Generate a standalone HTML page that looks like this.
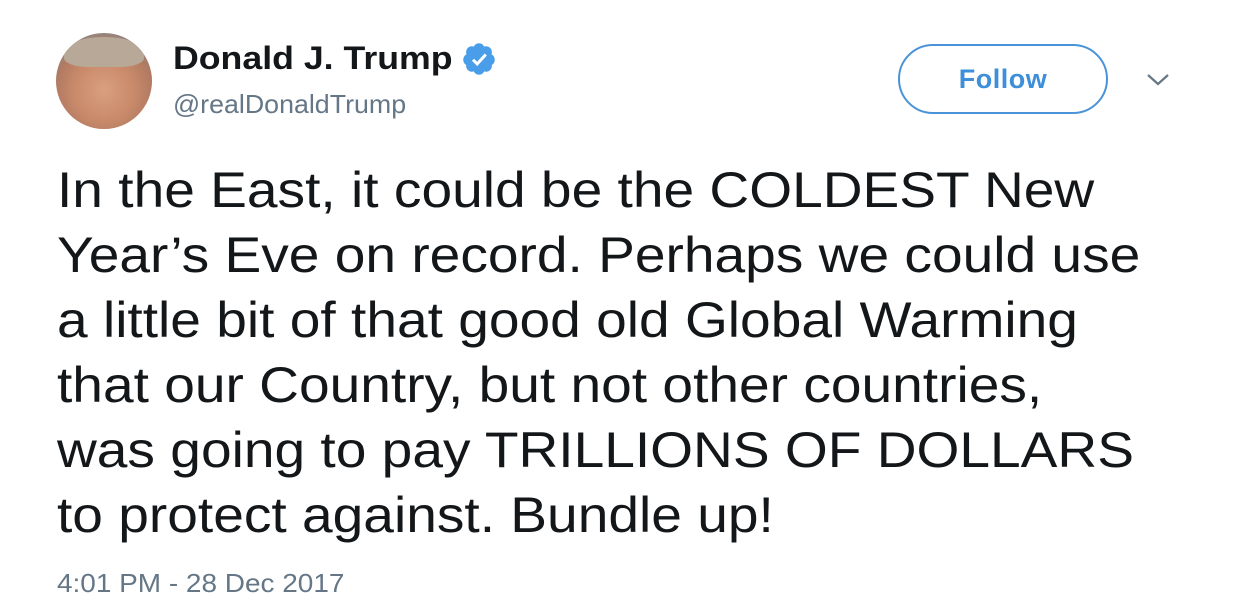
<!DOCTYPE html>
<html><head><meta charset="utf-8"><style>
body{margin:0;width:1240px;height:616px;background:#fff;font-family:"Liberation Sans",Arial,sans-serif;position:relative;overflow:hidden}
.av{position:absolute;left:56px;top:33px;width:96px;height:96px;border-radius:50%;background:radial-gradient(circle at 50% 60%,#d9a07f 0%,#c98a6a 40%,#b07a62 65%,#8a8a8a 80%,#bcd4e8 100%);overflow:hidden}
.hair{position:absolute;left:8px;top:4px;width:80px;height:30px;border-radius:50% 50% 30% 30%;background:#b8a898}
.s{transform-origin:0 0;white-space:nowrap}
.name{position:absolute;left:173px;top:40px;font-size:32px;font-weight:bold;color:#14171a;transform:scaleX(1.115)}
.handle{position:absolute;left:173px;top:89px;font-size:26px;color:#657786;transform:scaleX(1.03)}
.badge{position:absolute;left:461px;top:41px}
.btn{position:absolute;left:898px;top:44px;width:206px;height:66px;border:2px solid #4a93d8;border-radius:35px;color:#3d8fd9;font-weight:bold;font-size:27px;text-align:center;line-height:66px;letter-spacing:0.5px}
.chev{position:absolute;left:1146px;top:72px}
.txt{position:absolute;left:57px;top:158px;font-size:50px;line-height:65px;color:#14171a;transform:scaleX(1.102)}
.time{position:absolute;left:57px;top:568px;font-size:26px;color:#657786;transform:scaleX(1.075)}
</style></head><body>
<div class="av"><div class="hair"></div></div>
<div class="name s">Donald J. Trump</div>
<svg class="badge" width="36" height="36" viewBox="0 0 24 24"><path fill="#4a9de8" d="M22.5 12.5c0-1.58-.875-2.95-2.148-3.6.154-.435.238-.905.238-1.4 0-2.21-1.71-3.998-3.818-3.998-.47 0-.92.084-1.336.25C14.818 2.415 13.510 1.5 12 1.5s-2.816.917-3.437 2.25c-.415-.165-.866-.25-1.336-.25-2.11 0-3.818 1.79-3.818 4 0 .494.083.964.237 1.4-1.272.65-2.147 2.018-2.147 3.600 0 1.495.782 2.798 1.942 3.486-.02.17-.032.34-.032.514 0 2.21 1.708 4 3.818 4 .47 0 .92-.086 1.335-.25.62 1.334 1.926 2.250 3.437 2.250 1.512 0 2.818-.916 3.437-2.250.415.163.865.248 1.336.248 2.11 0 3.818-1.790 3.818-4 0-.174-.012-.344-.033-.513 1.158-.687 1.943-1.990 1.943-3.484z"/><path fill="none" stroke="#fff" stroke-width="2" d="M8 12.5l2.8 2.8L16.5 9"/></svg>
<div class="handle s">@realDonaldTrump</div>
<div class="btn">Follow</div>
<svg class="chev" width="24" height="16" viewBox="0 0 24 16"><path d="M2 3l10 9 10-9" fill="none" stroke="#657786" stroke-width="2.2"/></svg>
<div class="txt s">In the East, it could be the COLDEST New<br>Year’s Eve on record. Perhaps we could use<br>a little bit of that good old Global Warming<br>that our Country, but not other countries,<br>was going to pay TRILLIONS OF DOLLARS<br>to protect against. Bundle up!</div>
<div class="time s">4:01 PM - 28 Dec 2017</div>
</body></html>
